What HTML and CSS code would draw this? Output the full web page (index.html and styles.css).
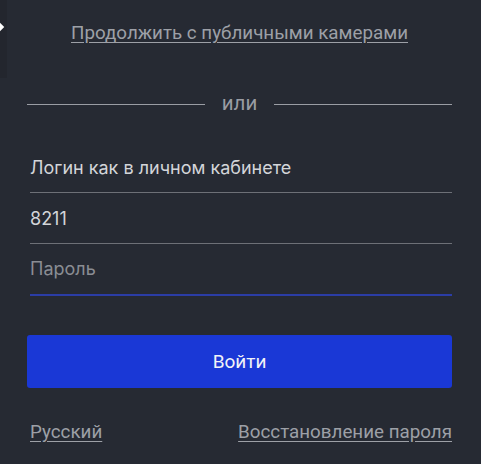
FILE: index.html
```html
<!DOCTYPE html>
<html lang="ru">
<head>
<meta charset="utf-8">
<link rel="stylesheet" href="styles.css">
</head>
<body>
<div class="edge"><span class="dot"></span></div>
<main class="login">
  <a class="public-link" href="#">Продолжить с публичными камерами</a>
  <div class="divider"><span class="line"></span><span class="or">или</span><span class="line"></span></div>
  <div class="field first"><span class="value">Логин как в личном кабинете</span></div>
  <div class="field"><span class="value">8211</span></div>
  <div class="field active"><span class="placeholder">Пароль</span></div>
  <button class="submit" type="button">Войти</button>
  <div class="footer">
    <a class="foot-link" href="#">Русский</a>
    <a class="foot-link" href="#">Восстановление пароля</a>
  </div>
</main>
</body>
</html>
```

FILE: styles.css
```css
html, body {
  margin: 0;
  padding: 0;
  background: #262a33;
  height: 464px;
  overflow: hidden;
}
body {
  font-family: Roboto, "Liberation Sans", sans-serif;
  position: relative;
}
.edge {
  position: absolute;
  left: 0;
  top: 0;
  width: 7px;
  height: 78px;
  background: #23262e;
}
.dot {
  position: absolute;
  left: -3px;
  top: 24px;
  width: 6px;
  height: 6px;
  background: #ffffff;
  transform: rotate(45deg);
}
.login {
  display: flex;
  flex-direction: column;
  padding: 0 29px 0 27px;
}
.public-link {
  align-self: center;
  margin-top: 22px;
  font-size: 18.8px;
  line-height: 22px;
  color: #9da0a7;
  text-decoration: underline;
  text-underline-offset: 3px;
}
.divider {
  display: flex;
  align-items: center;
  gap: 17px;
  margin-top: 50px;
  height: 20px;
}
.divider .line {
  flex: 1;
  height: 1px;
  background: #9a9da4;
}
.or {
  font-size: 20.5px;
  color: #9a9da4;
  line-height: 20px;
  padding-bottom: 3px;
}
.field {
  margin-left: 3px;
  height: 51px;
  border-bottom: 1px solid #6d7077;
  display: flex;
  align-items: flex-end;
  padding-bottom: 13px;
  box-sizing: border-box;
  font-family: Inter, Roboto, sans-serif;
  font-size: 18px;
  line-height: 22px;
}
.field.first { height: 79px; }
.field.active {
  height: 52px;
  padding-bottom: 14px;
  border-bottom: 2px solid #2b3da6;
}
.value { color: #d3d5d9; }
.placeholder { color: #8a8d93; }
.submit {
  margin-top: 39px;
  height: 53px;
  border: 0;
  border-radius: 3px;
  background: #1a38d6;
  color: #f2f3f7;
  font-family: Roboto, sans-serif;
  font-size: 19px;
}
.footer {
  display: flex;
  justify-content: space-between;
  margin-top: 33px;
  padding-left: 3px;
}
.foot-link {
  font-size: 18.8px;
  line-height: 22px;
  color: #9da0a7;
  text-decoration: underline;
  text-underline-offset: 3px;
}
```
